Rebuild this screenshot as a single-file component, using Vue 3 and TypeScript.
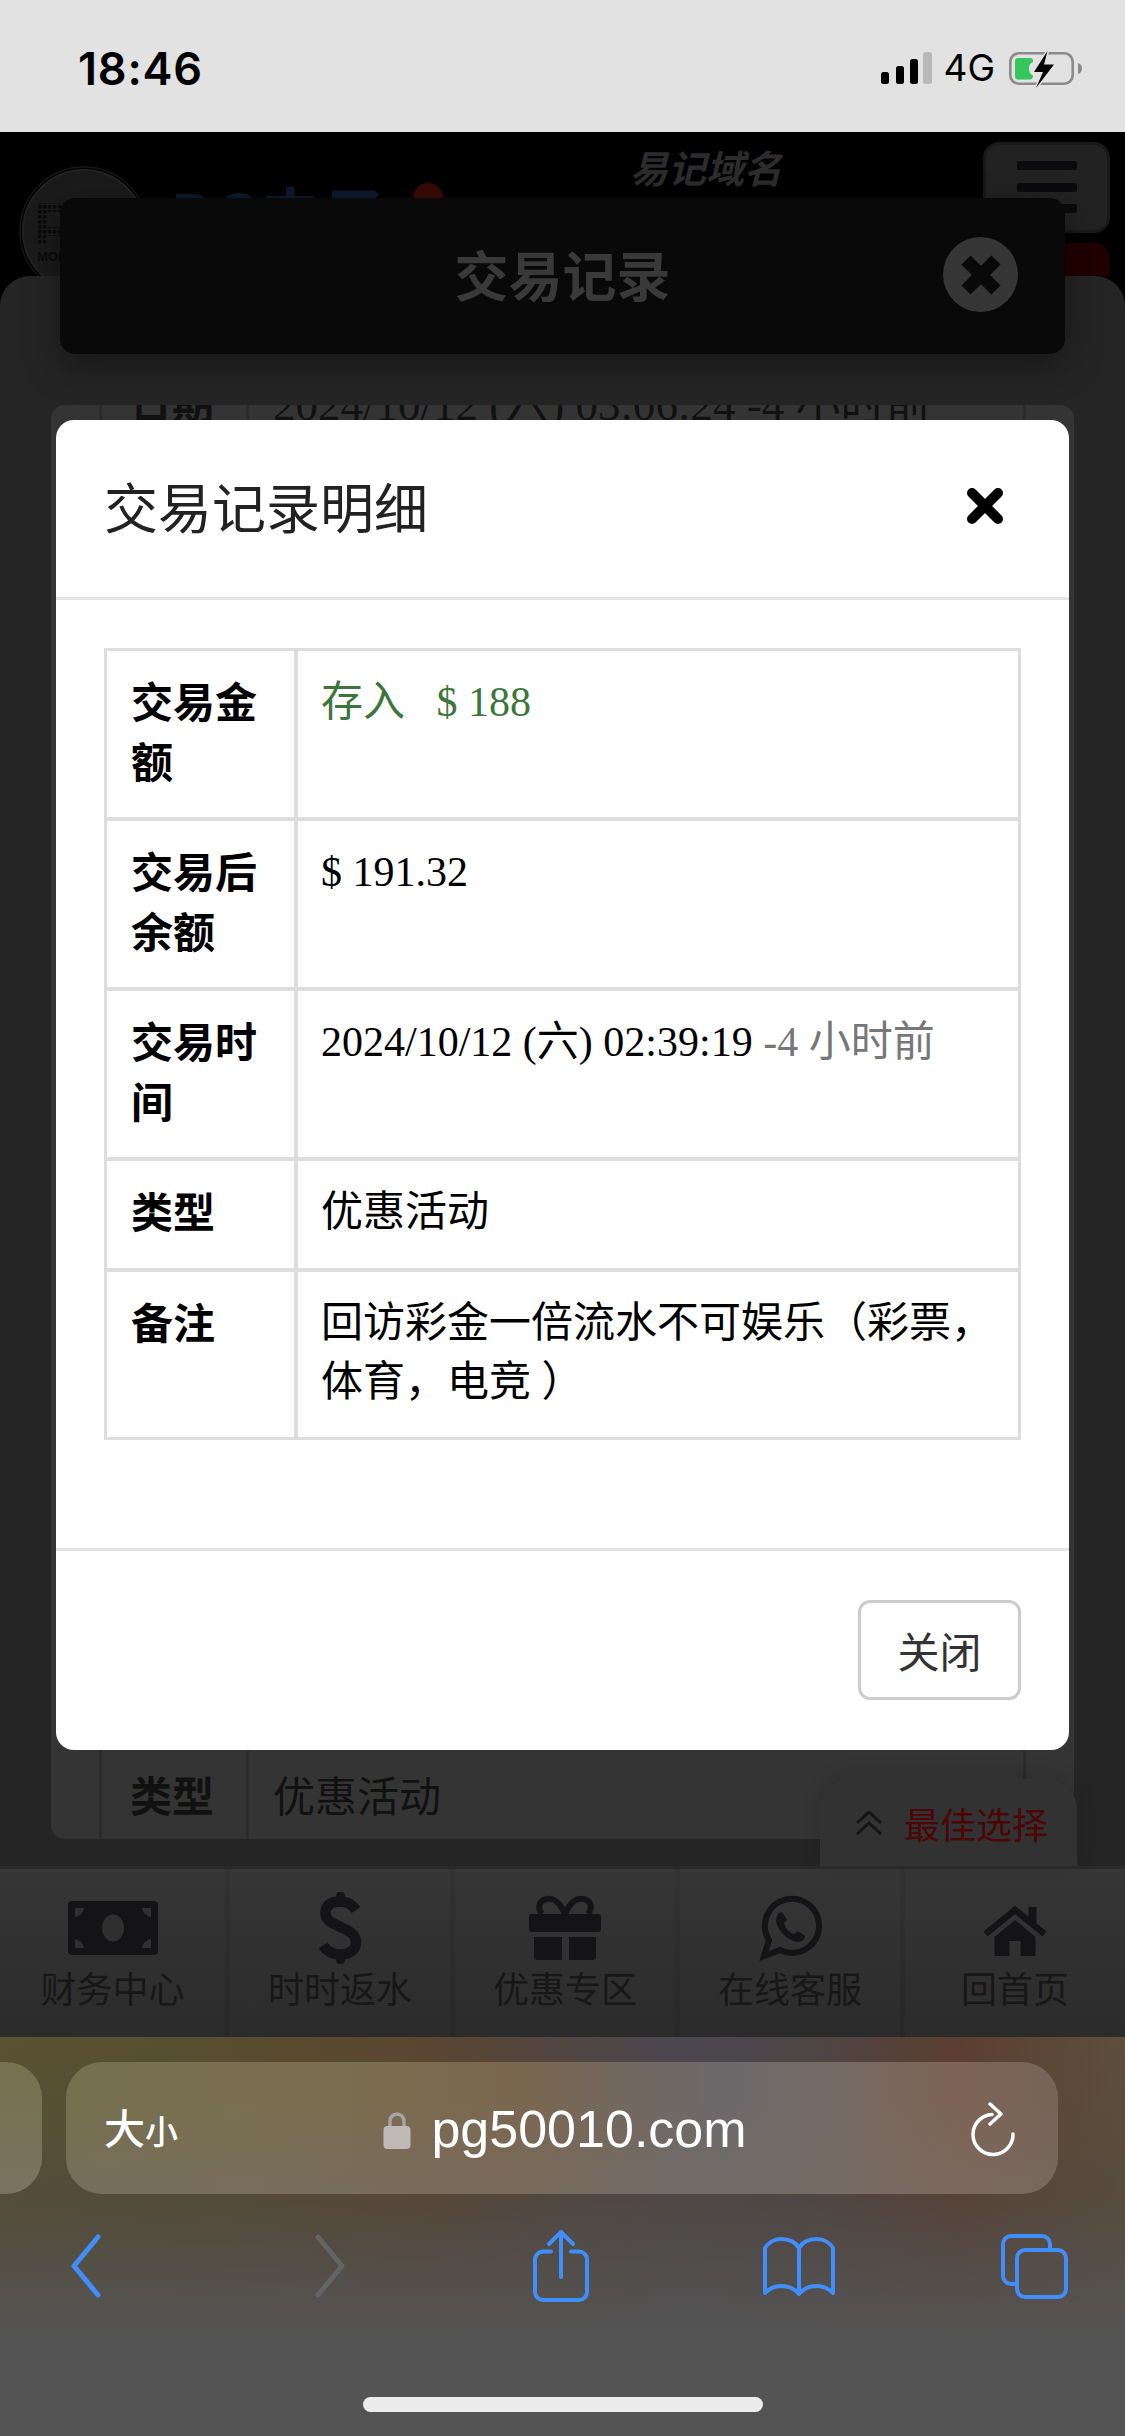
<script setup lang="ts">
// Dimmed mobile cashier page with the transaction detail dialog open, inside iOS Safari.

interface DetailRow {
  label: string;
  value: string;
  kind?: 'deposit' | 'time';
}

const rows: DetailRow[] = [
  { label: '交易金额', value: '存入 \u00a0 $ 188', kind: 'deposit' },
  { label: '交易后余额', value: '$ 191.32' },
  { label: '交易时间', value: '2024/10/12 (六) 02:39:19', kind: 'time' },
  { label: '类型', value: '优惠活动' },
  { label: '备注', value: '回访彩金一倍流水不可娱乐（彩票，体育，电竞 ）' },
];

const tabs = [
  { key: 'money', label: '财务中心' },
  { key: 'dollar', label: '时时返水' },
  { key: 'gift', label: '优惠专区' },
  { key: 'chat', label: '在线客服' },
  { key: 'home', label: '回首页' },
];
</script>

<template>
  <div class="phone">
    <header class="status">
      <span class="clock">18:46</span>
      <div class="status-right">
        <svg class="signal" viewBox="0 0 51 32" width="51" height="32">
          <rect x="0" y="20" width="8" height="12" rx="2.5" fill="#000" />
          <rect x="15" y="14" width="8" height="18" rx="2.5" fill="#000" />
          <rect x="29" y="7" width="8" height="25" rx="2.5" fill="#000" />
          <rect x="42" y="0" width="9" height="32" rx="2.5" fill="#b9b9b9" />
        </svg>
        <span class="net">4G</span>
        <svg class="battery" viewBox="0 0 73 42" width="73" height="42">
          <rect x="1.3" y="6.3" width="62.4" height="30.4" rx="8.500" fill="none" stroke="#8a8a8a" stroke-width="2.6" />
          <path d="M69 16c2.400.5 4 2.500 4 5.500s-1.600 5-4 5.500z" fill="#8a8a8a" />
          <path d="M9 11h12c2 0 3 1 3 3v1c-3 1-4 3-4 6.500s1 5.500 4 7v0c0 2-1 4-3 4H9c-2 0-3-1-3-3V14c0-2 1-3 3-3z" fill="#34c759" />
          <path d="M38.500 4 25 25H34L27 41 45 17.500H35z" fill="#000" stroke="#e2e2e2" stroke-width="3" paint-order="stroke" />
        </svg>
      </div>
    </header>

    <div class="site">
      <div class="site-head">
        <svg class="logo" viewBox="0 0 132 132" width="132" height="132">
          <defs>
            <pattern id="dots" width="5" height="5" patternUnits="userSpaceOnUse">
              <rect width="3.500" height="3.500" fill="#0b0b0b" />
            </pattern>
          </defs>
          <circle cx="66" cy="66" r="61" fill="#1b1b1b" stroke="#222" stroke-width="2" />
          <circle cx="66" cy="66" r="64" fill="none" stroke="#161616" stroke-width="1.500" />
          <rect x="20" y="38" width="10" height="42" fill="url(#dots)" />
          <rect x="20" y="38" width="40" height="9" fill="url(#dots)" />
          <rect x="20" y="62" width="40" height="9" fill="url(#dots)" />
          <text x="19" y="96" class="logo-text">MOBILE</text>
        </svg>
        <span class="brand">PG电子</span>
        <span class="badge" />
        <span class="domain">易记域名</span>
        <div class="head-right">
          <div class="burger"><i /><i /><i /></div>
          <div class="red-btn" />
        </div>
      </div>

      <main class="site-card">
        <div class="peek-table">
          <div class="peek-row peek-first">
            <b>日期</b>
            <span>2024/10/12 (六) 03:06:24 -4 小时前</span>
          </div>
          <div class="peek-row peek-last">
            <b>类型</b>
            <span>优惠活动</span>
          </div>
        </div>
      </main>

      <nav class="tabbar">
        <div v-for="tab in tabs" :key="tab.key" class="tab">
          <svg class="tab-icon" viewBox="0 0 90 72" width="90" height="72">
            <g v-if="tab.key === 'money'" transform="translate(0 9)">
              <rect width="90" height="54" rx="4" fill="#141416" />
              <ellipse cx="45" cy="27" rx="11" ry="13.500" fill="#2f2f2f" />
              <path d="M7 7h9c-1 5-4 8-9 9zM83 7h-9c1 5 4 8 9 9zM7 47h9c-1-5-4-8-9-9zM83 47h-9c1-5 4-8 9-9z" fill="#2f2f2f" />
            </g>
            <g v-else-if="tab.key === 'dollar'" transform="translate(25 0)">
              <path d="M16 4a4.500 4.500 0 0 1 9 0v8h-9zM16 60h9v8a4.500 4.500 0 0 1-9 0z" fill="#141416" />
              <path d="M36 18C32 12 26 9.500 20 9.500 10 9.500 5.500 14 5.500 21c0 7 6 10 15 14 10 4 15.500 8 15.500 15 0 8-7 12.500-16 12.500-7 0-13-3-17-9" fill="none" stroke="#141416" stroke-width="10.500" />
            </g>
            <g v-else-if="tab.key === 'gift'" transform="translate(9 4)">
              <rect x="0" y="18" width="72" height="18" rx="3" fill="#141416" />
              <path d="M5 41h28v23H9a4 4 0 0 1-4-4zM40 41h27v19a4 4 0 0 1-4 4H40z" fill="#141416" />
              <path d="M36 18C31 6 24 2 18 3 10 4 8 12 13 18M36 18C41 6 48 2 54 3c8 1 10 9 5 15" fill="none" stroke="#141416" stroke-width="6" />
            </g>
            <g v-else-if="tab.key === 'chat'" transform="translate(14 4)">
              <path d="M5 60 10 44A27 27 0 1 1 21 54Z" fill="none" stroke="#141416" stroke-width="6" stroke-linejoin="miter" />
              <path d="M20 17c-3 3-4 8-1 14 4 8 12 14 20 15 4 0 7-3 7-6l-7-5-4 3c-5-2-9-6-10-11l3-3-5-8z" fill="#141416" />
            </g>
            <g v-else transform="translate(13.500 15)">
              <path d="M45 0h8v16h-8z" fill="#141416" />
              <path d="M2 27 31.500 3 61 27" fill="none" stroke="#141416" stroke-width="6.500" />
              <path d="M31.500 13 52 30v19H37V34H26v15H11V30z" fill="#141416" />
            </g>
          </svg>
          <span class="tab-label">{{ tab.label }}</span>
        </div>
      </nav>
    </div>

    <footer class="browser">
      <div class="url-row">
        <div class="prev-tab" />
        <div class="url-bar">
          <span class="reader">大<small>小</small></span>
          <div class="address">
            <svg viewBox="0 0 28 38" width="28" height="38">
              <path d="M7 17V10a7 7 0 0 1 14 0v7" fill="none" stroke="#a9a3a1" stroke-width="3.500" />
              <rect x="0.500" y="15" width="27" height="23" rx="4" fill="#bfb9b7" />
            </svg>
            <span>pg50010.com</span>
          </div>
          <svg class="reload" viewBox="0 0 46 56" width="46" height="56">
            <path d="M21 12.500A20 20 0 1 0 42 32" fill="none" stroke="#fff" stroke-width="3.500" stroke-linecap="round" />
            <path d="M19 2 30 12 19 22" fill="none" stroke="#fff" stroke-width="3.500" stroke-linecap="round" stroke-linejoin="round" />
          </svg>
        </div>
      </div>

      <div class="toolbar">
        <svg class="t-back" viewBox="0 0 30 64" width="30" height="64">
          <path d="M27 3 3 32l24 29" fill="none" stroke="#3f8efc" stroke-width="5" stroke-linecap="round" stroke-linejoin="round" />
        </svg>
        <svg class="t-forward" viewBox="0 0 30 64" width="30" height="64">
          <path d="M3 3l24 29L3 61" fill="none" stroke="#646464" stroke-width="5" stroke-linecap="round" stroke-linejoin="round" />
        </svg>
        <svg class="t-share" viewBox="0 0 56 72" width="56" height="72">
          <path d="M18 21.500H10a8 8 0 0 0-8 8V62a8 8 0 0 0 8 8h36a8 8 0 0 0 8-8V29.500a8 8 0 0 0-8-8h-8" fill="none" stroke="#3f8efc" stroke-width="4" stroke-linecap="round" />
          <path d="M28 47V2M16 14 28 2l12 12" fill="none" stroke="#3f8efc" stroke-width="4" stroke-linecap="round" stroke-linejoin="round" />
        </svg>
        <svg class="t-book" viewBox="0 0 72 60" width="72" height="60">
          <path d="M36 12C32 5 25 3 18 3 11 3 5 7 2 12v45c4-4 10-7 16-7 8 0 14 3 18 8 4-5 10-8 18-8 6 0 12 3 16 7V12C67 7 61 3 54 3c-7 0-14 2-18 9zM36 12v46" fill="none" stroke="#3f8efc" stroke-width="4" stroke-linejoin="round" />
        </svg>
        <svg class="t-tabs" viewBox="0 0 68 66" width="68" height="66">
          <path d="M50 17v-6a8 8 0 0 0-8-8H11a8 8 0 0 0-8 8v32a8 8 0 0 0 8 8h6" fill="none" stroke="#3f8efc" stroke-width="4" />
          <rect x="17" y="17" width="49" height="47" rx="8" fill="none" stroke="#3f8efc" stroke-width="4" />
        </svg>
      </div>

      <div class="home-bar" />
    </footer>

    <!-- Dimmed list dialog, sits over the page -->
    <div class="back-dialog">
      <span>交易记录</span>
      <div class="back-close">
        <svg viewBox="0 0 40 40" width="40" height="40">
          <path d="M5 5 35 35M35 5 5 35" stroke="#0a090a" stroke-width="13" />
        </svg>
      </div>
    </div>

    <div class="scroll-top">
      <svg viewBox="0 0 26 24" width="26" height="24">
        <path d="M1 12 13 1l12 11M1 23l12-11 12 11" fill="none" stroke="#151515" stroke-width="3" />
      </svg>
      <span>最佳选择</span>
    </div>

    <!-- Detail dialog -->
    <section class="modal">
      <div class="modal-head">
        <h4>交易记录明细</h4>
        <svg viewBox="0 0 36 36" width="36" height="36">
          <path d="M5 5 31 31M31 5 5 31" stroke="#000" stroke-width="10" stroke-linecap="round" />
        </svg>
      </div>
      <div class="modal-body">
        <table>
          <tbody>
            <tr v-for="row in rows" :key="row.label">
              <th>{{ row.label }}</th>
              <td :class="{ deposit: row.kind === 'deposit' }">
                {{ row.value }}
                <span v-if="row.kind === 'time'" class="ago">-4 小时前</span>
              </td>
            </tr>
          </tbody>
        </table>
      </div>
      <div class="modal-foot">
        <button type="button">关闭</button>
      </div>
    </section>
  </div>
</template>

<style scoped>
.phone {
  position: relative;
  display: flex;
  flex-direction: column;
  width: 1125px;
  height: 2436px;
  overflow: hidden;
  font-family: "Noto Sans CJK SC", sans-serif;
  background: #000;
}

/* status bar */
.status {
  flex: none;
  display: flex;
  align-items: center;
  justify-content: space-between;
  height: 132px;
  padding: 4px 43px 0 78px;
  box-sizing: border-box;
  background: #e2e2e2;
  color: #000;
}

.clock {
  font-family: Inter, sans-serif;
  font-size: 45px;
  font-weight: 600;
  letter-spacing: 0.8px;
}

.status-right {
  display: flex;
  align-items: center;
}

.net {
  margin: 0 14px 0 11px;
  font-family: Inter, sans-serif;
  font-size: 37px;
  line-height: 38px;
}

/* page behind the dialogs */
.site {
  flex: none;
  display: flex;
  flex-direction: column;
  height: 1905px;
}

.site-head {
  flex: none;
  display: flex;
  align-items: flex-start;
  height: 144px;
  overflow: hidden;
  background: #000;
}

.logo {
  flex: none;
  margin: 33px 0 0 18px;
}

.logo-text {
  font-family: "Liberation Sans", sans-serif;
  font-size: 13px;
  font-weight: 700;
  fill: #0b0b0b;
}

.brand {
  flex: none;
  width: 225px;
  margin: 36px 0 0 20px;
  font-size: 64px;
  font-weight: 700;
  line-height: 90px;
  color: #0c1a2e;
}

.badge {
  flex: none;
  width: 30px;
  height: 60px;
  margin: 51px 0 0 18px;
  border-radius: 15px 15px 0 0;
  background: #3a0a05;
}

.domain {
  flex: none;
  margin: 10px 0 0 187px;
  font-size: 38px;
  font-style: italic;
  font-weight: 700;
  line-height: 50px;
  color: #2c2c2c;
}

.head-right {
  flex: none;
  display: flex;
  flex-direction: column;
  gap: 10px;
  width: 127px;
  margin: 10px 15px 0 auto;
}

.burger {
  display: flex;
  flex-direction: column;
  align-items: center;
  gap: 12.5px;
  height: 91px;
  padding-top: 16px;
  box-sizing: border-box;
  border: 3px solid #191919;
  border-radius: 16px;
  background: #222;
}

.burger i {
  display: block;
  width: 60px;
  height: 9px;
  border-radius: 2px;
  background: #0b0b0d;
}

.red-btn {
  height: 60px;
  border-radius: 16px 16px 0 0;
  background: #210000;
}

.site-card {
  flex: 1;
  min-height: 0;
  padding: 129px 51px 27px;
  border-radius: 30px 30px 0 0;
  background: #252525;
}

.peek-table {
  display: flex;
  flex-direction: column;
  justify-content: space-between;
  height: 100%;
  overflow: hidden;
  border-radius: 14px;
  background:
    linear-gradient(#2b2b2b, #2b2b2b) 48px 0 / 3px 100% no-repeat,
    linear-gradient(#2b2b2b, #2b2b2b) 195px 0 / 3px 100% no-repeat,
    linear-gradient(#2b2b2b, #2b2b2b) 972px 0 / 3px 100% no-repeat,
    #343434;
  color: #111;
}

.peek-row {
  display: grid;
  grid-template-columns: 79px 143px 1fr;
  flex: none;
  align-items: center;
  height: 86px;
  font-size: 42px;
}

.peek-row b {
  grid-column: 2;
}

.peek-row span {
  font-family: "Liberation Serif", "Noto Sans CJK SC", serif;
}

.peek-first {
  margin-top: -48px;
}

.peek-first span {
  font-size: 45px;
  white-space: nowrap;
}

.peek-last {
  padding-bottom: 6px;
  box-sizing: border-box;
}

/* bottom navigation */
.tabbar {
  flex: none;
  display: grid;
  grid-template-columns: repeat(5, 1fr);
  height: 171px;
  border-top: 3px solid #2a2a2a;
  box-sizing: border-box;
  background: linear-gradient(180deg, #363636, #2b2b2b);
}

.tab {
  display: flex;
  flex-direction: column;
  align-items: center;
  padding-top: 23px;
  border-left: 5px solid rgba(0, 0, 0, 0.07);
}

.tab:first-child {
  border-left: 0;
}

.tab-label {
  font-size: 36px;
  line-height: 46px;
  color: #171717;
}

/* safari chrome */
.browser {
  flex: none;
  display: flex;
  flex-direction: column;
  height: 399px;
  background:
    linear-gradient(180deg, rgba(84, 84, 84, 0) 0, rgba(80, 72, 64, 0.55) 160px, #545454 300px),
    linear-gradient(90deg, #5a5230 0, #574f30 15%, #5c4530 38%, #4a4750 60%, #4c4648 70%, #5c3e30 85%, #5e4f3c 100%);
}

.url-row {
  flex: none;
  display: flex;
  gap: 24px;
  height: 132px;
  margin-top: 25px;
}

.prev-tab {
  flex: none;
  width: 42px;
  border-radius: 0 36px 36px 0;
  background: linear-gradient(180deg, #77714f, #7a7360);
}

.url-bar {
  flex: none;
  display: grid;
  grid-template-columns: 1fr auto 1fr;
  align-items: center;
  width: 992px;
  padding: 0 41px 0 38px;
  box-sizing: border-box;
  border-radius: 36px;
  background:
    linear-gradient(180deg, rgba(120, 116, 110, 0) 30%, rgba(118, 108, 100, 0.55) 100%),
    linear-gradient(90deg, #76704f 0, #7a6e50 25%, #7b674f 45%, #6c696c 66%, #756a63 78%, #7e6455 90%, #766458 100%);
  color: #fff;
}

.reader {
  font-size: 41px;
  font-weight: 500;
  line-height: 50px;
}

.reader small {
  font-size: 33px;
}

.address {
  display: flex;
  align-items: center;
  gap: 20px;
  margin-left: 9px;
  font-family: "Liberation Sans", sans-serif;
  font-size: 52px;
  line-height: 60px;
}

.address span {
  margin-top: 2px;
}

.address svg {
  margin-top: 4px;
}

.reload {
  justify-self: end;
  margin-top: 4px;
}

.toolbar {
  flex: none;
  display: flex;
  align-items: center;
  height: 72px;
  margin-top: 36px;
}

.t-back {
  margin-left: 71px;
}

.t-forward {
  margin-left: 214px;
}

.t-share {
  margin-left: 188px;
}

.t-book {
  margin-left: 174px;
}

.t-tabs {
  margin-left: 165px;
}

.home-bar {
  flex: none;
  width: 400px;
  height: 15px;
  margin: 95px auto 0;
  border-radius: 8px;
  background: #ececec;
}

/* overlays */
.back-dialog {
  position: absolute;
  top: 198px;
  left: 60px;
  display: flex;
  align-items: center;
  justify-content: center;
  width: 1005px;
  height: 156px;
  padding-bottom: 6px;
  box-sizing: border-box;
  border-radius: 15px;
  background: #0a090a;
  box-shadow: 0 12px 36px rgba(0, 0, 0, 0.4);
  font-size: 54px;
  font-weight: 700;
  color: #393939;
}

.back-close {
  position: absolute;
  top: 39px;
  right: 47px;
  display: flex;
  align-items: center;
  justify-content: center;
  width: 75px;
  height: 75px;
  border-radius: 50%;
  background: #363636;
}

.scroll-top {
  position: absolute;
  top: 1779px;
  left: 820px;
  display: flex;
  align-items: center;
  gap: 22px;
  width: 257px;
  height: 87px;
  padding-left: 36px;
  box-sizing: border-box;
  border-radius: 30px 30px 0 0;
  background: #323232;
  box-shadow: 0 -4px 20px rgba(0, 0, 0, 0.12);
  font-size: 36px;
  color: #4d0505;
}

.modal {
  position: absolute;
  top: 420px;
  left: 56px;
  display: flex;
  flex-direction: column;
  width: 1013px;
  height: 1330px;
  border-radius: 18px;
  background: #fff;
  color: #000;
}

.modal-head {
  flex: none;
  display: flex;
  align-items: center;
  justify-content: space-between;
  height: 180px;
  padding: 0 66px 6px 48px;
  box-sizing: border-box;
  border-bottom: 3px solid #e5e5e5;
}

.modal-head h4 {
  margin: 0;
  font-size: 54px;
  font-weight: 400;
  line-height: 76px;
  color: #222;
}

.modal-body {
  flex: 1;
  padding: 48px 48px 0;
}

/* outer frame 3px, inner rules 4px */
table {
  width: 917px;
  border: 3px solid #ddd;
  border-spacing: 0;
  table-layout: fixed;
  box-sizing: border-box;
  font-family: "Liberation Serif", "Noto Sans CJK SC", serif;
  font-size: 42px;
  line-height: 59.5px;
}

th,
td {
  text-align: left;
  vertical-align: top;
}

tr + tr th,
tr + tr td {
  border-top: 4px solid #ddd;
}

th {
  width: 187px;
  box-sizing: border-box;
  padding: 19px 20px 28px 24px;
  font-family: "Noto Sans CJK SC", sans-serif;
  font-weight: 700;
}

td {
  padding: 22px 20px 24px 23px;
  border-left: 4px solid #ddd;
}

.deposit {
  color: #3c763d;
}

.ago {
  color: #777;
}

.modal-foot {
  flex: none;
  display: flex;
  align-items: center;
  justify-content: flex-end;
  height: 202px;
  padding-right: 48px;
  padding-bottom: 2px;
  box-sizing: border-box;
  border-top: 3px solid #e5e5e5;
}

.modal-foot button {
  width: 163px;
  height: 100px;
  padding: 0;
  border: 3px solid #ccc;
  border-radius: 12px;
  background: #fff;
  font-family: inherit;
  font-size: 42px;
  color: #333;
}
</style>
